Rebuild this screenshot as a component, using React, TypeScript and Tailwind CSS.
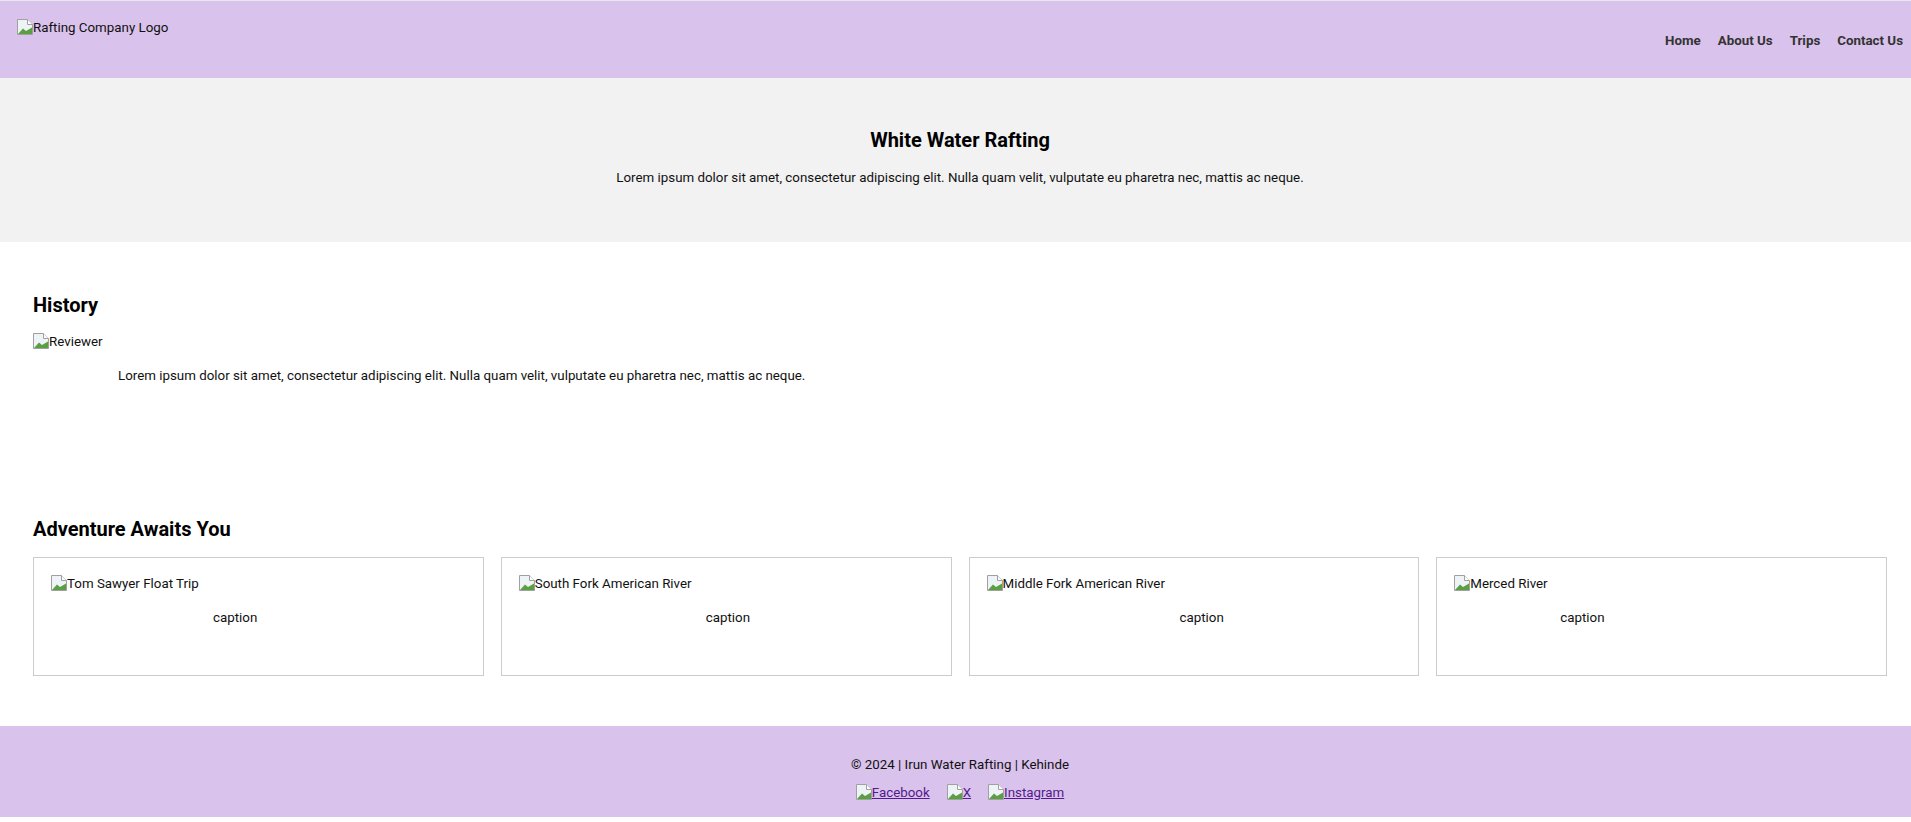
import React from "react";

const navLinks = ["Home", "About Us", "Trips", "Contact Us"];

const lorem =
  "Lorem ipsum dolor sit amet, consectetur adipiscing elit. Nulla quam velit, vulputate eu pharetra nec, mattis ac neque.";

const trips = [
  { alt: "Tom Sawyer Float Trip", cap: "pl-[162px]" },
  { alt: "South Fork American River", cap: "pl-[187px]" },
  { alt: "Middle Fork American River", cap: "pl-[193px]" },
  { alt: "Merced River", cap: "pl-[106px]" },
];

// stand-in for the browser's broken image glyph
function BrokenImg({ alt, link = false }: { alt: string; link?: boolean }) {
  return (
    <span className="inline-flex items-center h-[16px]">
      <svg width="16" height="16" viewBox="0 0 16 16" className="shrink-0">
        <path d="M0.5 0.5h10l5 5v10h-15z" fill="#eef3f8" stroke="#a0a0a0" />
        <path d="M10.5 0.5v5h5" fill="#ffffff" stroke="#a0a0a0" />
        <path d="M1 15 L6 9.5 L9 12 L15 8.5 V15 Z" fill="#5aa043" />
      </svg>
      <span className={link ? "underline" : ""}>{alt}</span>
    </span>
  );
}

export default function App() {
  return (
    <div className="w-full overflow-hidden bg-white" style={{ fontFamily: "Roboto, 'Liberation Sans', sans-serif" }}>
      <div className="w-[1920px] text-[13.33px] leading-[15px] text-[#111]">
        {/* Header */}
        <header className="h-[78px] border-t border-[#ece6f0] bg-[#d9c2ec] flex justify-between px-[17px]">
          <div className="pt-[18px]">
            <BrokenImg alt="Rafting Company Logo" />
          </div>
          <nav className="flex items-center gap-[17px] pt-[2px] font-bold text-[#333]">
            {navLinks.map((l) => (
              <a key={l} href="#">
                {l}
              </a>
            ))}
          </nav>
        </header>

        {/* Hero */}
        <section className="bg-[#f2f2f2] h-[164px] pt-[50px] text-center">
          <h1 className="text-[20px] leading-[24px] font-bold text-black">White Water Rafting</h1>
          <p className="mt-[18px]">{lorem}</p>
        </section>

        {/* History */}
        <section className="px-[33px] pt-[51px]">
          <h2 className="text-[20px] leading-[24px] font-bold text-black">History</h2>
          <div className="mt-[16px]">
            <BrokenImg alt="Reviewer" />
          </div>
          <p className="mt-[16px] pl-[85px]">{lorem}</p>
        </section>

        {/* Trips */}
        <section className="px-[33px] pt-[134px]">
          <h2 className="text-[20px] leading-[24px] font-bold text-black">Adventure Awaits You</h2>
          <div className="mt-[16px] grid grid-cols-4 gap-[17px]">
            {trips.map((t) => (
              <figure key={t.alt} className="h-[119px] border border-[#cccccc] px-[17px] pt-[17px]">
                <BrokenImg alt={t.alt} />
                <figcaption className={`mt-[16px] ${t.cap}`}>caption</figcaption>
              </figure>
            ))}
          </div>
        </section>

        {/* Footer */}
        <footer className="mt-[50px] h-[91px] bg-[#d9c2ec] pt-[31px] flex flex-col items-center">
          <p>&copy; 2024 | Irun Water Rafting | Kehinde</p>
          <div className="mt-[12px] flex gap-[17px]">
            {["Facebook", "X", "Instagram"].map((s) => (
              <a key={s} href="#" className="text-[#551a8b]">
                <BrokenImg alt={s} link />
              </a>
            ))}
          </div>
        </footer>
      </div>
    </div>
  );
}
